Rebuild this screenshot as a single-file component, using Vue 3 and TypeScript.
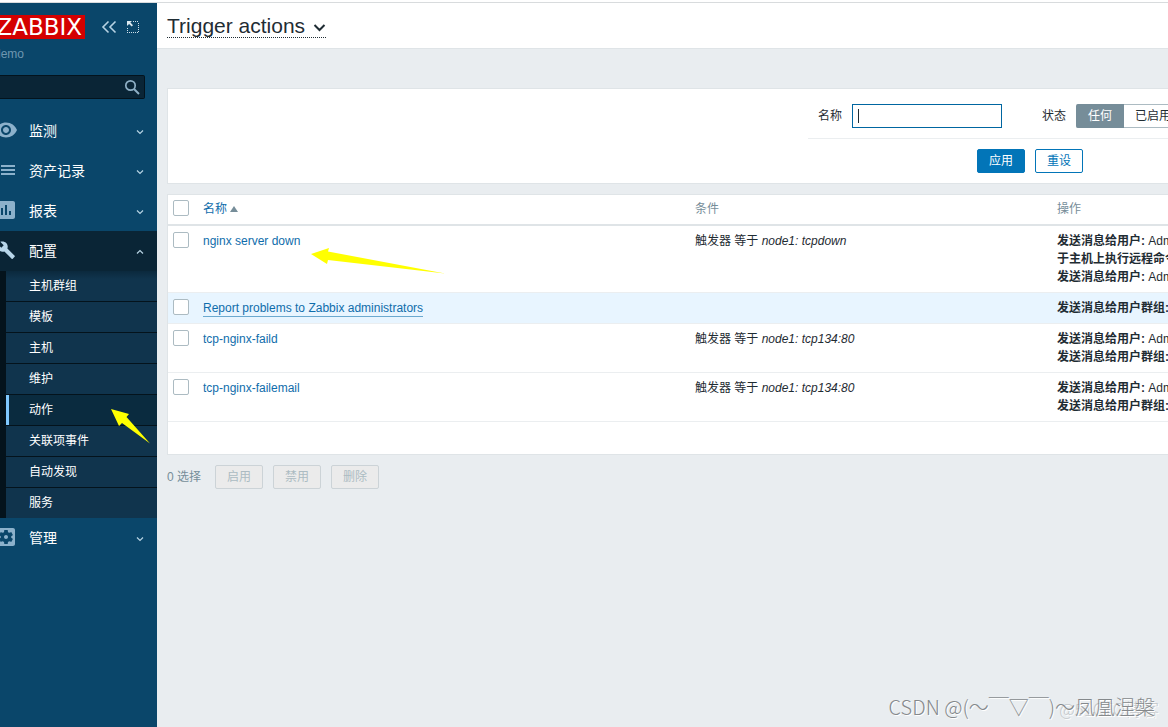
<script setup lang="ts">
import { ref } from 'vue'

interface MenuEntry {
  label: string
  icon: string
  transform?: string
  open?: boolean
  children?: string[]
}

interface Operation {
  title: string
  target?: string
}

interface ActionRow {
  name: string
  trigger?: string
  hovered?: boolean
  operations: Operation[]
}

const menu: MenuEntry[] = [
  {
    label: '监测',
    icon: 'M12 4.5C7 4.5 2.7 7.6 1 12c1.7 4.4 6 7.5 11 7.5s9.300-3.100 11-7.500c-1.700-4.400-6-7.500-11-7.500zM12 17c-2.760 0-5-2.240-5-5s2.240-5 5-5 5 2.240 5 5-2.240 5-5 5zm0-8c-1.660 0-3 1.340-3 3s1.340 3 3 3 3-1.340 3-3-1.340-3-3-3z',
  },
  { label: '资产记录', icon: 'M7 7h14v2H7zM7 11h14v2H7zM7 15h14v2H7z' },
  {
    label: '报表',
    icon: 'M19 3H5c-1.100 0-2 .9-2 2v14c0 1.100.9 2 2 2h14c1.100 0 2-.9 2-2V5c0-1.100-.9-2-2-2zM9 17H7v-7h2v7zm4 0h-2V7h2v10zm4 0h-2v-4h2v4z',
  },
  {
    label: '配置',
    icon: 'M22.7 19l-9.100-9.100c.9-2.300.4-5-1.500-6.900-2-2-5-2.400-7.400-1.300L9 6 6 9 1.600 4.700C.4 7.100.9 10.100 2.900 12.100c1.900 1.900 4.600 2.400 6.900 1.500l9.100 9.100c.4.4 1 .4 1.400 0l2.300-2.300c.5-.4.5-1.100.1-1.400z',
    transform: 'translate(2.500 2.500) scale(.8)',
    open: true,
    children: ['主机群组', '模板', '主机', '维护', '动作', '关联项事件', '自动发现', '服务'],
  },
  {
    label: '管理',
    icon: 'M12 10c-1.100 0-2 .9-2 2s.9 2 2 2 2-.9 2-2-.9-2-2-2zm7-7H5c-1.110 0-2 .9-2 2v14c0 1.100.89 2 2 2h14c1.110 0 2-.9 2-2V5c0-1.100-.89-2-2-2zm-1.750 9c0 .23-.02.46-.05.68l1.480 1.160c.13.11.17.3.08.45l-1.400 2.420c-.09.15-.27.21-.43.15l-1.740-.7c-.36.28-.76.51-1.180.69l-.26 1.850c-.03.17-.18.3-.35.3h-2.800c-.17 0-.32-.13-.35-.29l-.26-1.850c-.43-.18-.82-.41-1.180-.69l-1.740.7c-.16.06-.34 0-.43-.15l-1.400-2.420c-.09-.15-.05-.34.08-.45l1.480-1.160c-.03-.23-.05-.46-.05-.69 0-.23.02-.46.05-.68l-1.480-1.160c-.13-.11-.17-.3-.08-.45l1.400-2.420c.09-.15.27-.21.43-.15l1.740.7c.36-.28.76-.51 1.180-.69l.26-1.850c.03-.17.18-.3.35-.3h2.800c.17 0 .32.13.35.29l.26 1.850c.43.18.82.41 1.180.69l1.740-.7c.16-.06.34 0 .43.15l1.400 2.420c.09.15.05.34-.08.45l-1.480 1.160c.03.23.05.46.05.69z',
  },
]

const activePage = '动作'
const toUser: Operation = { title: '发送消息给用户:', target: 'Admin' }
const toGroup: Operation = { title: '发送消息给用户群组:' }

const rows: ActionRow[] = [
  {
    name: 'nginx server down',
    trigger: 'node1: tcpdown',
    operations: [toUser, { title: '于主机上执行远程命令' }, toUser],
  },
  { name: 'Report problems to Zabbix administrators', hovered: true, operations: [toGroup] },
  { name: 'tcp-nginx-faild', trigger: 'node1: tcp134:80', operations: [toUser, toGroup] },
  { name: 'tcp-nginx-failemail', trigger: 'node1: tcp134:80', operations: [toUser, toGroup] },
]

const states = ['任何', '已启用']
const state = ref('任何')
const filterName = ref('')
const search = ref('')
</script>

<template>
  <div class="page">
    <div class="topline"></div>
    <aside class="sidebar">
      <div class="brand">
        <a class="logo" href="#">ZABBIX</a>
        <div class="brand-tools">
          <button class="tool" type="button" aria-label="Collapse">
            <svg width="16" height="14" viewBox="0 0 16 14" fill="none" stroke="#b7d3e3" stroke-width="1.600">
              <path d="M7.500 1.500L2 7l5.500 5.500M14.500 1.500L9 7l5.500 5.500" />
            </svg>
          </button>
          <button class="tool" type="button" aria-label="Hide">
            <svg width="14" height="14" viewBox="0 0 14 14">
              <path d="M7 1.500h6M12.500 3v10M1 12.500h12M1.500 8v5" fill="none" stroke="#cfe0ea" stroke-dasharray="1 1" />
              <path d="M1 1h5L4.400 2.600l2.600 2.600-1.300 1.300-2.600-2.600L1 6z" fill="#dce9f0" />
            </svg>
          </button>
        </div>
      </div>
      <div class="server">demo</div>
      <div class="search">
        <input v-model="search" type="text" aria-label="Search" />
        <button class="tool" type="button" aria-label="Search">
          <svg width="16" height="16" viewBox="0 0 16 16" fill="none" stroke="#8fb0c6">
            <circle cx="6.500" cy="6.500" r="4.700" stroke-width="1.700" />
            <path d="M10 10l5 5" stroke-width="2" />
          </svg>
        </button>
      </div>
      <nav>
        <div v-for="entry in menu" :key="entry.label">
          <button class="menu-head" :class="{ open: entry.open }" type="button" :aria-expanded="!!entry.open">
            <svg class="menu-icon" width="18" height="24" viewBox="6 1 18 24">
              <path :d="entry.icon" :transform="entry.transform" />
            </svg>
            <span class="menu-label">{{ entry.label }}</span>
            <svg class="chevron" width="8" height="8" viewBox="0 0 8 8">
              <path :d="entry.open ? 'M1 6.500L4 3.500l3 3' : 'M1 3.500l3 3 3-3'" />
            </svg>
          </button>
          <ul v-if="entry.children" class="submenu">
            <li v-for="child in entry.children" :key="child">
              <a href="#" :class="{ current: child === activePage }">{{ child }}</a>
            </li>
          </ul>
        </div>
      </nav>
    </aside>

    <main class="main">
      <header class="header">
        <h1>
          <button class="title" type="button">
            Trigger actions
            <svg width="13" height="14" viewBox="0 0 13 14" fill="none" stroke="#1f2c33" stroke-width="2">
              <path d="M1.500 6l5 5 5-5" />
            </svg>
          </button>
        </h1>
      </header>

      <div class="content">
        <section class="panel filter">
          <form class="filter-form" @submit.prevent>
            <div class="filter-fields">
              <label class="name-label" for="filter-name">名称</label>
              <div class="name-box">
                <input id="filter-name" v-model="filterName" type="text" />
                <span class="caret"></span>
              </div>
              <span id="state-label" class="state-label">状态</span>
              <div class="segments" role="radiogroup" aria-labelledby="state-label">
                <label v-for="s in states" :key="s" class="segment" :class="{ selected: s === state }">
                  <input v-model="state" type="radio" name="state" :value="s" />{{ s }}
                </label>
              </div>
            </div>
            <div class="filter-buttons">
              <button class="btn primary" type="submit">应用</button>
              <button class="btn" type="reset">重设</button>
            </div>
          </form>
        </section>

        <section class="panel list">
          <table>
            <colgroup>
              <col class="col-check" />
              <col />
              <col class="col-cond" />
              <col class="col-ops" />
            </colgroup>
            <thead>
              <tr>
                <th class="check"><input type="checkbox" aria-label="全选" /></th>
                <th><a class="sort" href="#">名称<span class="asc"></span></a></th>
                <th>条件</th>
                <th>操作</th>
              </tr>
            </thead>
            <tbody>
              <tr v-for="row in rows" :key="row.name" :class="{ hovered: row.hovered }">
                <td class="check"><input type="checkbox" :aria-label="row.name" /></td>
                <td><a class="link" href="#">{{ row.name }}</a></td>
                <td><template v-if="row.trigger">触发器 等于 <em>{{ row.trigger }}</em></template></td>
                <td>
                  <div v-for="(op, i) in row.operations" :key="i" class="op">
                    <b>{{ op.title }}</b> {{ op.target }}
                  </div>
                </td>
              </tr>
            </tbody>
          </table>
          <div class="list-foot"></div>
        </section>

        <div class="bulk">
          <span class="count">0 选择</span>
          <button class="btn" type="button" disabled>启用</button>
          <button class="btn" type="button" disabled>禁用</button>
          <button class="btn" type="button" disabled>删除</button>
        </div>
      </div>
    </main>

    <svg class="arrows" width="460" height="460" viewBox="0 0 460 460" aria-hidden="true">
      <path d="M311 254L329 248L328 251.500L445 273.500L328 260L327 264z" />
      <path d="M111 409L129 414L126.500 417L150 443.500L122 423L119 426z" />
    </svg>
    <div class="mark faint">@51CTO博客</div>
    <div class="mark">CSDN @(～￣▽￣)～凤凰涅槃</div>
  </div>
</template>

<style>
body {
  margin: 0;
  background: #e9edf0;
}
</style>

<style scoped>
.page {
  position: relative;
  display: grid;
  grid-template-columns: 157px minmax(0, 1fr);
  grid-template-rows: 3px 1fr;
  min-height: 100vh;
  overflow: hidden;
  background: #e9edf0;
  color: #1f2c33;
  font: 12px/18px "Liberation Sans", "Noto Sans CJK SC", sans-serif;
}
button,
input {
  box-sizing: border-box;
  margin: 0;
  padding: 0;
  font: inherit;
  color: inherit;
}
button {
  cursor: pointer;
}
a {
  color: #0f6dab;
  text-decoration: none;
}
.topline {
  grid-column: 1 / -1;
  box-sizing: border-box;
  background: #fff;
  border-bottom: 1px solid #d8dbdd;
}
.sidebar {
  background: #0a466a;
  color: #fff;
}
.brand {
  display: flex;
  align-items: center;
  gap: 16px;
  padding-top: 12px;
}
.logo {
  display: flex;
  justify-content: flex-end;
  box-sizing: border-box;
  width: 85px;
  height: 24px;
  padding-right: 3px;
  overflow: hidden;
  background: #d40000;
  color: #fff;
  font: 23px/24px "DejaVu Sans", sans-serif;
}
.brand-tools {
  display: flex;
  gap: 9px;
}
.tool {
  display: flex;
  border: 0;
  background: none;
}
.server {
  display: flex;
  justify-content: flex-end;
  width: 24px;
  margin-top: 6px;
  overflow: hidden;
  color: #6f97b0;
}
.search {
  display: flex;
  align-items: center;
  box-sizing: border-box;
  height: 24px;
  margin: 12px 12px 12px 0;
  padding-right: 4px;
  border: 1px solid #03131d;
  border-left: 0;
  border-radius: 0 2px 2px 0;
  background: #0a2536;
}
.search input {
  flex: 1;
  min-width: 0;
  border: 0;
  outline: 0;
  background: none;
}
.menu-head {
  display: flex;
  align-items: center;
  width: 100%;
  height: 40px;
  padding-right: 13px;
  border: 0;
  background: none;
  color: #fff;
  font-size: 14px;
  text-align: left;
}
.menu-head.open {
  background: #0a2536;
}
.menu-icon {
  margin-right: 11px;
  fill: #8cb1cb;
}
.open .menu-icon {
  fill: #b8d6ea;
}
.menu-label {
  flex: 1;
}
.chevron {
  fill: none;
  stroke: #b7d3e3;
  stroke-width: 1.200;
}
.submenu {
  margin: 0;
  padding: 0 0 0 6px;
  list-style: none;
  background: #04131c;
}
.submenu li + li {
  border-top: 1px solid #04131c;
}
.submenu a {
  display: block;
  padding: 6px 0 6px 20px;
  border-left: 3px solid #10344d;
  background: #10344d;
  color: #fff;
}
.submenu li:first-child a {
  border-left: 0;
  padding-left: 23px;
  background: linear-gradient(#0b293d, #10344d 8px);
}
.submenu a.current {
  border-color: #7fc8ff;
  background: #0a2b3f;
}
.header {
  box-sizing: border-box;
  height: 46px;
  padding: 11px 10px 0;
  background: #fff;
  border-bottom: 1px solid #dfe4e7;
}
h1 {
  display: flex;
  margin: 0;
  font-weight: 400;
}
.title {
  display: flex;
  align-items: center;
  gap: 8px;
  border: 0;
  border-bottom: 1px dotted #1f2c33;
  background: none;
  font-size: 21px;
  line-height: 23px;
}
.content {
  padding: 39px 0 10px 10px;
}
.panel {
  margin-bottom: 10px;
  background: #fff;
  border: 1px solid #dfe4e7;
  border-right: 0;
  overflow: hidden;
}
.filter {
  display: flex;
  justify-content: flex-end;
}
.filter-form {
  width: 444px;
  margin-right: -84px;
  padding: 15px 0 10px;
}
.filter-fields {
  display: flex;
  align-items: center;
  padding: 0 0 10px 10px;
  border-bottom: 1px solid #ebeef0;
}
.name-box {
  position: relative;
  margin: 0 40px 0 10px;
}
.name-box input {
  display: block;
  width: 150px;
  height: 24px;
  padding: 0 5px;
  border: 1px solid #0066a1;
  outline: 0;
  background: #fff;
}
.caret {
  position: absolute;
  top: 5px;
  left: 6px;
  width: 1px;
  height: 14px;
  background: #1f2c33;
}
.state-label {
  margin-right: 10px;
}
.segments {
  display: flex;
}
.segment {
  position: relative;
  padding: 2px 11px;
  border: 1px solid #acbbc2;
  border-left: 0;
}
.segment.selected {
  padding-left: 12px;
  border-color: #768d99;
  border-radius: 2px 0 0 2px;
  background: #768d99;
  color: #fff;
}
.segment input {
  position: absolute;
  opacity: 0;
}
.filter-buttons {
  display: flex;
  justify-content: center;
  gap: 10px;
  padding-top: 10px;
}
.btn {
  width: 48px;
  height: 24px;
  border: 1px solid #0275b8;
  border-radius: 2px;
  background: #fff;
  color: #0275b8;
}
.btn.primary {
  background: #0275b8;
  color: #fff;
}
.btn:disabled {
  border-color: #ccd3d7;
  background: #ebebeb;
  color: #acbbc2;
  cursor: default;
}
table {
  width: 100%;
  border-collapse: separate;
  border-spacing: 0;
  table-layout: fixed;
}
.col-check {
  width: 30px;
}
.col-cond {
  width: 362px;
}
.col-ops {
  width: 116px;
}
th,
td {
  padding: 6px 5px;
  overflow: hidden;
  text-align: left;
  vertical-align: top;
  white-space: nowrap;
}
th {
  padding: 5px 5px 6px;
  border-bottom: 2px solid #dfe4e7;
  color: #768d99;
  font-weight: 400;
}
td {
  border-bottom: 1px solid #ebeef0;
}
tr.hovered td {
  background: #e8f5ff;
}
.check input {
  appearance: none;
  display: block;
  width: 16px;
  height: 16px;
  border: 1px solid #acbbc2;
  border-radius: 2px;
  background: #fff;
}
.sort {
  display: flex;
  align-items: center;
  gap: 3px;
}
.asc {
  border: 4px solid transparent;
  border-top: 0;
  border-bottom: 6px solid #768d99;
}
th + th,
td + td {
  height: 18px;
}
.hovered .link {
  display: inline-block;
  line-height: 16px;
  border-bottom: 1px solid #6ba9cf;
}
.list-foot {
  height: 32px;
}
.bulk {
  display: flex;
  align-items: center;
  gap: 10px;
}
.count {
  margin-right: 4px;
  color: #768d99;
}
.arrows {
  position: absolute;
  top: 0;
  left: 0;
  fill: #ff0;
  pointer-events: none;
}
.mark {
  position: absolute;
  right: 13px;
  bottom: 6px;
  color: #85898c;
  font: 300 20px/28px "Noto Sans CJK SC", sans-serif;
  text-shadow: 1px 1px 0 #fff;
  white-space: nowrap;
  pointer-events: none;
}
.mark.faint {
  right: 9px;
  bottom: 4px;
  color: #c3c7ca;
  font-size: 17px;
}
</style>
